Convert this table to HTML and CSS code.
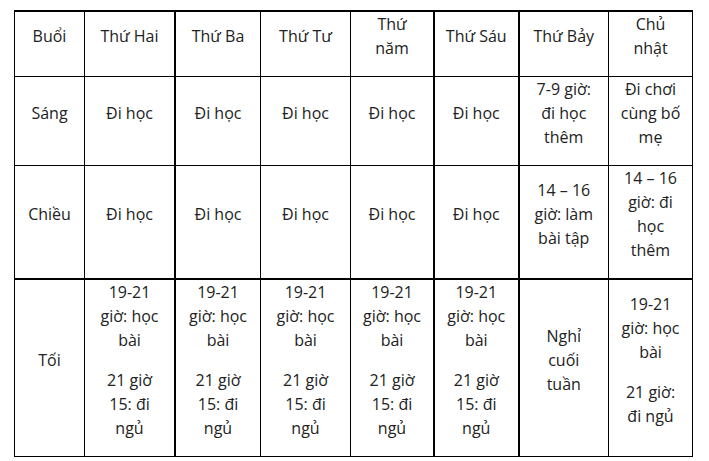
FILE: index.html
```html
<!DOCTYPE html>
<html lang="vi">
<head>
<meta charset="utf-8">
<title>Thời gian biểu</title>
<link rel="stylesheet" href="styles.css">
</head>
<body>
<table class="schedule">
  <colgroup>
    <col class="c1"><col class="c2"><col class="c3"><col class="c4">
    <col class="c5"><col class="c6"><col class="c7"><col class="c8">
  </colgroup>
  <tbody>
    <tr class="r1">
      <td><p>Buổi</p></td>
      <td><p>Thứ Hai</p></td>
      <td class="thick-l"><p>Thứ Ba</p></td>
      <td><p>Thứ Tư</p></td>
      <td><p>Thứ năm</p></td>
      <td class="thick-l"><p>Thứ Sáu</p></td>
      <td class="thick-l"><p>Thứ Bảy</p></td>
      <td><p>Chủ nhật</p></td>
    </tr>
    <tr>
      <td><p>Sáng</p></td>
      <td><p>Đi học</p></td>
      <td class="thick-l"><p>Đi học</p></td>
      <td><p>Đi học</p></td>
      <td><p>Đi học</p></td>
      <td class="thick-l"><p>Đi học</p></td>
      <td class="thick-l"><p>7-9 giờ: đi học thêm</p></td>
      <td><p>Đi chơi cùng bố mẹ</p></td>
    </tr>
    <tr class="r3">
      <td><p>Chiều</p></td>
      <td><p>Đi học</p></td>
      <td class="thick-l"><p>Đi học</p></td>
      <td><p>Đi học</p></td>
      <td><p>Đi học</p></td>
      <td class="thick-l"><p>Đi học</p></td>
      <td class="thick-l"><p>14 – 16 giờ: làm bài tập</p></td>
      <td><p>14 – 16 giờ: đi học thêm</p></td>
    </tr>
    <tr>
      <td><p>Tối</p></td>
      <td><p>19-21 giờ: học bài</p><p>21 giờ 15: đi ngủ</p></td>
      <td class="thick-l"><p>19-21 giờ: học bài</p><p>21 giờ 15: đi ngủ</p></td>
      <td><p>19-21 giờ: học bài</p><p>21 giờ 15: đi ngủ</p></td>
      <td><p>19-21 giờ: học bài</p><p>21 giờ 15: đi ngủ</p></td>
      <td class="thick-l"><p>19-21 giờ: học bài</p><p>21 giờ 15: đi ngủ</p></td>
      <td class="thick-l"><p>Nghỉ cuối tuần</p></td>
      <td><p>19-21 giờ: học bài</p><p>21 giờ: đi ngủ</p></td>
    </tr>
  </tbody>
</table>
</body>
</html>
```

FILE: styles.css
```css
html, body {
  margin: 0;
  padding: 0;
  background: #ffffff;
}

body {
  padding: 10px 0 0 14px;
  font-family: "Open Sans", "Noto Sans", "Liberation Sans", sans-serif;
  font-size: 16px;
  line-height: 24px;
  color: #222222;
}

.schedule {
  border-collapse: collapse;
  table-layout: fixed;
  width: 679px;
}

.schedule .c1 { width: 70px; }
.schedule .c2 { width: 90.5px; }
.schedule .c3 { width: 85.5px; }
.schedule .c4 { width: 90px; }
.schedule .c5 { width: 83.5px; }
.schedule .c6 { width: 84.5px; }
.schedule .c7 { width: 90px; }
.schedule .c8 { width: 84px; }

.schedule td {
  border: 1px solid #000000;
  padding: 0 10px;
  text-align: center;
  vertical-align: middle;
}

.schedule .r1 td {
  border-top-width: 2px;
}

.schedule .r3 td {
  border-bottom-width: 2px;
}

.schedule td.thick-l {
  border-left-width: 2px;
}

.schedule p {
  margin: 0 0 16px;
}
```
